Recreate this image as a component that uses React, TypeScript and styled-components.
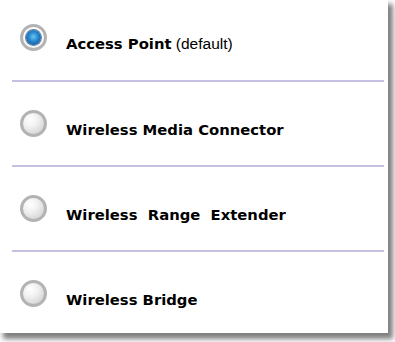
import React from "react";
import styled, { createGlobalStyle, css } from "styled-components";

const Global = createGlobalStyle`
  html, body { margin: 0; padding: 0; background: #ffffff; }
  body { font-family: "DejaVu Sans", Verdana, sans-serif; }
`;

const Page = styled.div`
  width: 395px;
  height: 342px;
  overflow: hidden;
`;

const Panel = styled.div`
  width: 388px;
  height: 333px;
  background: #ffffff;
  box-shadow: 4px 5px 5px 1px rgba(0, 0, 0, 0.5);
  box-sizing: border-box;
  overflow: hidden;
`;

const List = styled.div`
  display: flex;
  flex-direction: column;
  margin: 0 4px 0 12px;
`;

const Row = styled.div<{ $first?: boolean; $last?: boolean }>`
  display: flex;
  align-items: flex-start;
  gap: 19px;
  padding-left: 8px;
  box-sizing: border-box;
  height: 85px;
  padding-top: 28px;
  border-bottom: 2px solid #c4c0e2;
  ${(p) =>
    p.$first &&
    css`
      height: 82px;
      padding-top: 24px;
    `}
  ${(p) =>
    p.$last &&
    css`
      border-bottom: none;
    `}
`;

const RadioOuter = styled.span<{ $checked?: boolean }>`
  flex: none;
  width: 27px;
  height: 27px;
  border-radius: 50%;
  box-sizing: border-box;
  display: flex;
  align-items: center;
  justify-content: center;
  border: 3px solid #b3b3b3;
  ${(p) =>
    p.$checked
      ? css`
          background: radial-gradient(circle at 50% 40%, #ffffff 55%, #e4e4e4 100%);
        `
      : css`
          background: radial-gradient(circle at 35% 30%, #ffffff 0%, #f2f2f2 35%, #c9c9c9 100%);
        `}
`;

const Dot = styled.span`
  width: 15px;
  height: 15px;
  border-radius: 50%;
  background: radial-gradient(circle at 50% 45%, #6cc4f2 0%, #2a8ad0 40%, #105a9c 80%, #0b3d70 100%);
  box-shadow: 0 0 0 1px #5d7e9e;
`;

const Label = styled.span`
  margin-top: 11px;
  font-size: 14.8px;
  line-height: 18px;
  font-weight: 700;
  color: #000000;
  white-space: pre;
`;

const Note = styled.span`
  font-family: "Liberation Sans", Arial, sans-serif;
  font-weight: 400;
  font-size: 15.5px;
`;

const options = [
  { label: "Access Point", note: " (default)", checked: true },
  { label: "Wireless Media Connector" },
  { label: "Wireless  Range  Extender" },
  { label: "Wireless Bridge" },
];

export default function App() {
  return (
    <>
      <Global />
      <Page>
        <Panel>
          <List>
            {options.map((o, i) => (
              <Row key={o.label} $first={i === 0} $last={i === options.length - 1}>
                <RadioOuter $checked={o.checked}>{o.checked && <Dot />}</RadioOuter>
                <Label>
                  {o.label}
                  {o.note && <Note>{o.note}</Note>}
                </Label>
              </Row>
            ))}
          </List>
        </Panel>
      </Page>
    </>
  );
}
